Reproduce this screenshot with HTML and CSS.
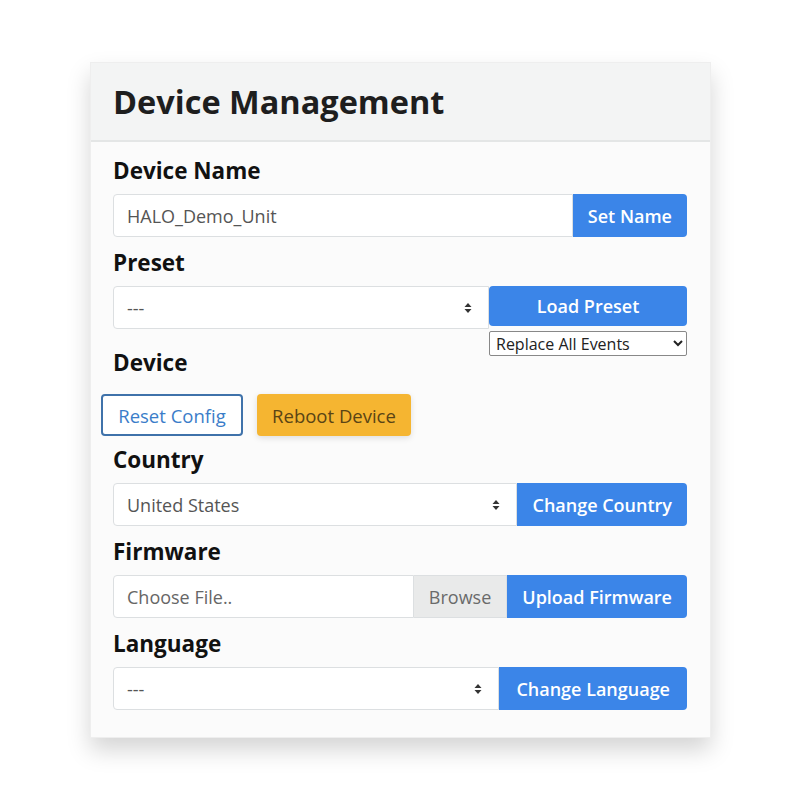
FILE: index.html
```html
<!DOCTYPE html>
<html lang="en">
<head>
    <meta charset="UTF-8">
    <meta name="viewport" content="width=device-width, initial-scale=1.0">
    <title>Device Management</title>
    <link rel="stylesheet" href="styles.css">
</head>
<body>
    <div class="card">
        <div class="card-header">
            <h1>Device Management</h1>
        </div>
        <div class="card-body">
            <div class="group">
                <label class="label">Device Name</label>
                <div class="input-group">
                    <input class="field" type="text" value="HALO_Demo_Unit">
                    <button class="btn btn-blue">Set Name</button>
                </div>
            </div>

            <div class="group group-preset">
                <label class="label">Preset</label>
                <div class="input-group">
                    <div class="select-wrap">
                        <select class="field">
                            <option>---</option>
                        </select>
                        <svg class="arrows" width="8" height="12" viewBox="0 0 8 12"><path d="M4 1 L7.5 5 H0.5 Z M4 11 L7.5 7 H0.5 Z" fill="#333"/></svg>
                    </div>
                    <div class="preset-actions">
                        <button class="btn btn-blue btn-wide">Load Preset</button>
                        <select class="mode">
                            <option>Replace All Events</option>
                            <option>Append Events</option>
                        </select>
                    </div>
                </div>
            </div>

            <div class="group group-device">
                <label class="label">Device</label>
                <div class="device-buttons">
                    <button class="btn btn-outline">Reset Config</button>
                    <button class="btn btn-warning">Reboot Device</button>
                </div>
            </div>

            <div class="group">
                <label class="label">Country</label>
                <div class="input-group">
                    <div class="select-wrap">
                        <select class="field">
                            <option>United States</option>
                        </select>
                        <svg class="arrows" width="8" height="12" viewBox="0 0 8 12"><path d="M4 1 L7.5 5 H0.5 Z M4 11 L7.5 7 H0.5 Z" fill="#333"/></svg>
                    </div>
                    <button class="btn btn-blue">Change Country</button>
                </div>
            </div>

            <div class="group">
                <label class="label">Firmware</label>
                <div class="input-group">
                    <div class="field file-name">Choose File..</div>
                    <span class="browse">Browse</span>
                    <button class="btn btn-blue">Upload Firmware</button>
                </div>
            </div>

            <div class="group">
                <label class="label">Language</label>
                <div class="input-group">
                    <div class="select-wrap">
                        <select class="field">
                            <option>---</option>
                        </select>
                        <svg class="arrows" width="8" height="12" viewBox="0 0 8 12"><path d="M4 1 L7.5 5 H0.5 Z M4 11 L7.5 7 H0.5 Z" fill="#333"/></svg>
                    </div>
                    <button class="btn btn-blue btn-lang">Change Language</button>
                </div>
            </div>
        </div>
    </div>
</body>
</html>
```

FILE: styles.css
```css
body {
    margin: 0;
    padding: 62px 0 60px 90px;
    background: #fff;
    font-family: "Open Sans", "Noto Sans", sans-serif;
    color: #222;
}
.card {
    width: 619px;
    background: #fbfbfb;
    border: 1px solid #eee;
    box-shadow: 0 12px 22px rgba(0, 0, 0, 0.17);
}
.card-header {
    height: 77px;
    background: #f3f4f4;
    border-bottom: 2px solid #e4e6e6;
    display: flex;
    align-items: center;
    padding: 0 22px;
}
.card-header h1 {
    margin: 0;
    font-size: 32.5px;
    font-weight: 700;
    color: #1e1e1e;
}
.card-body {
    padding: 16px 23px 27px 22px;
}
.group {
    margin-bottom: 13px;
}
.group:last-child {
    margin-bottom: 0;
}
.group-preset {
    margin-bottom: 21px;
}
.group-device {
    margin-bottom: 11px;
}
.label {
    display: block;
    font-size: 22.5px;
    font-weight: 700;
    line-height: 26px;
    color: #111;
    margin-bottom: 10px;
}
.input-group {
    display: flex;
    height: 43px;
}
.field {
    flex: 1;
    min-width: 0;
    height: 43px;
    box-sizing: border-box;
    border: 1px solid #dcdfe1;
    border-radius: 4px 0 0 4px;
    background: #fff;
    padding: 0 13px;
    font-family: inherit;
    font-size: 18px;
    color: #555;
    outline: none;
}
.select-wrap {
    flex: 1;
    display: flex;
    position: relative;
}
.select-wrap select {
    appearance: none;
    -webkit-appearance: none;
    width: 100%;
}
.arrows {
    position: absolute;
    right: 17px;
    top: 16px;
}
.file-name {
    display: flex;
    align-items: center;
    color: #666;
}
.browse {
    display: flex;
    align-items: center;
    padding: 0 15px;
    background: #e9eaea;
    border: 1px solid #dcdfe1;
    border-left: none;
    color: #6a6a6a;
    font-size: 18px;
}
.btn {
    font-family: inherit;
    font-size: 18px;
    font-weight: 600;
    border: none;
    padding: 0 15px;
    cursor: pointer;
}
.btn-blue {
    background: #3b85e8;
    color: #fff;
    border-radius: 0 4px 4px 0;
    height: 43px;
}
.btn-lang {
    padding: 0 17px;
}
.preset-actions {
    width: 198px;
    position: relative;
}
.btn-wide {
    width: 198px;
    height: 40px;
    border-radius: 4px;
}
.mode {
    position: absolute;
    top: 45px;
    left: 0;
    width: 198px;
    height: 25px;
    font-family: inherit;
    font-size: 16px;
    color: #222;
    background: #fff;
    border: 1px solid #888;
    border-radius: 2px;
    padding: 0 2px;
}
.device-buttons {
    display: flex;
    gap: 14px;
    margin: 18px 0 0 -12px;
}
.btn-outline {
    height: 42px;
    width: 142px;
    padding: 0;
    background: #fff;
    border: 2px solid #3f72aa;
    border-radius: 4px;
    color: #3a7dc9;
    font-weight: 400;
    font-size: 18.5px;
}
.btn-warning {
    height: 42px;
    width: 154px;
    padding: 0;
    background: #f5b531;
    color: #5a4415;
    border-radius: 4px;
    font-weight: 400;
    font-size: 18.5px;
    box-shadow: 0 2px 6px rgba(0, 0, 0, 0.12);
}
```
